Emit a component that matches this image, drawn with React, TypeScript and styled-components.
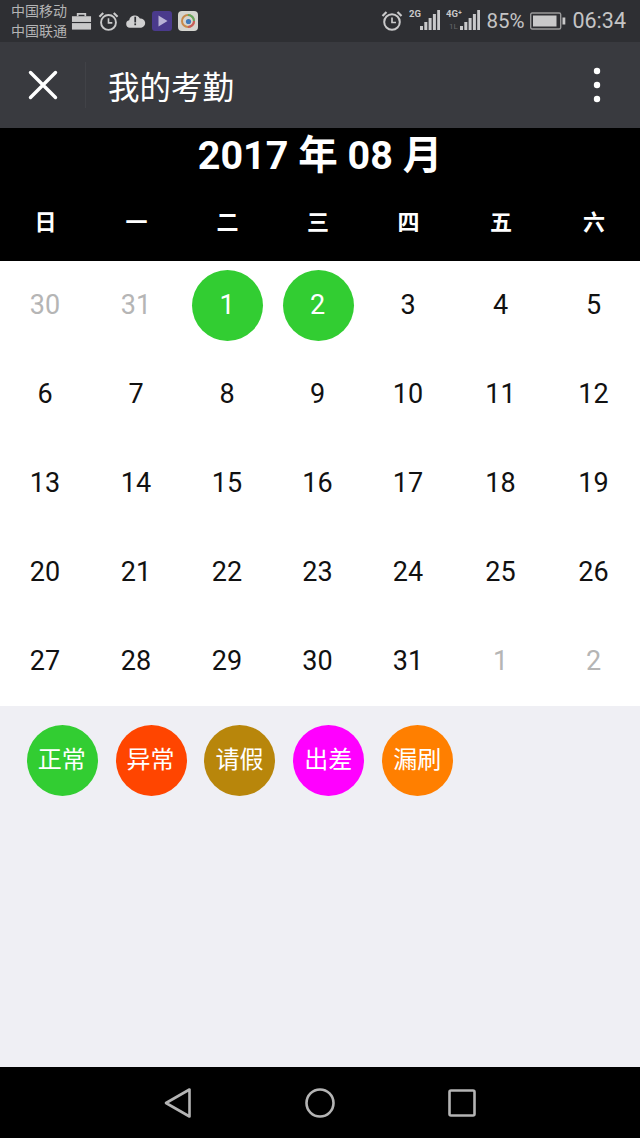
import React from 'react'
import styled, { createGlobalStyle } from 'styled-components'

const CJK = `Roboto, "Noto Sans CJK SC", sans-serif`

const GlobalStyle = createGlobalStyle`
  html, body {
    margin: 0;
    padding: 0;
    background: #efeff4;
    font-family: ${CJK};
  }
`

const Screen = styled.div`
  width: 640px;
  height: 1138px;
  display: flex;
  flex-direction: column;
  overflow: hidden;
`

const StatusBar = styled.div`
  height: 42px;
  background: #2e2f33;
  display: flex;
  align-items: center;
  padding: 0 14px 0 11px;
  color: #c9c9ca;
  flex-shrink: 0;
`

const Carriers = styled.div`
  font-size: 14px;
  line-height: 20px;
  width: 60px;
  color: #b4b4b5;
  white-space: nowrap;
`

const StatusIcons = styled.div`
  display: flex;
  align-items: center;
  gap: 6px;
`

const Spacer = styled.div`
  flex: 1;
`

const StatusRight = styled.div`
  display: flex;
  align-items: center;
  gap: 6px;
`

const StatusText = styled.span<{ $size: number }>`
  font-size: ${({ $size }) => $size}px;
  color: #c4c4c5;
  line-height: 42px;
`

const Toolbar = styled.div`
  height: 86px;
  background: #393a3f;
  display: flex;
  align-items: center;
  flex-shrink: 0;
`

const CloseBox = styled.div`
  width: 86px;
  height: 46px;
  display: flex;
  align-items: center;
  justify-content: center;
  border-right: 1px solid #414247;
  box-sizing: border-box;
`

const Title = styled.div`
  font-size: 31.5px;
  color: #fff;
  margin-left: 22px;
  flex: 1;
`

const MoreBox = styled.div`
  width: 86px;
  display: flex;
  justify-content: center;
`

const MonthHeader = styled.div`
  height: 133px;
  background: #000;
  color: #fff;
  flex-shrink: 0;
  display: flex;
  flex-direction: column;
`

const MonthTitle = styled.div`
  height: 56px;
  line-height: 56px;
  text-align: center;
  font-size: 39.5px;
  font-weight: 700;
`

const columns = '91px 91px 91px 90px 91px 94px 92px'

const WeekRow = styled.div`
  display: grid;
  grid-template-columns: ${columns};
  height: 77px;
  align-items: center;
`

const WeekDay = styled.div`
  text-align: center;
  font-size: 22px;
  font-weight: 700;
  padding-bottom: 5px;
`

const DayGrid = styled.div`
  display: grid;
  grid-template-columns: ${columns};
  grid-auto-rows: 89px;
  height: 445px;
  background: #fff;
  flex-shrink: 0;
`

const DayCell = styled.div`
  display: flex;
  align-items: center;
  justify-content: center;
`

const DayNumber = styled.div<{ $muted?: boolean; $marked?: boolean }>`
  width: 71px;
  height: 71px;
  border-radius: 50%;
  display: flex;
  align-items: center;
  justify-content: center;
  box-sizing: border-box;
  padding: 0 1px 2px 0;
  font-size: 27px;
  color: ${({ $muted, $marked }) => ($marked ? '#fff' : $muted ? '#b5b5b5' : '#111')};
  background: ${({ $marked }) => ($marked ? '#32cd32' : 'transparent')};
`

const LegendArea = styled.div`
  flex: 1;
  background: #efeff4;
  display: flex;
  gap: 17.9px;
  padding: 19px 0 0 26.7px;
  align-items: flex-start;
`

const LegendDot = styled.div<{ $color: string }>`
  width: 71px;
  height: 71px;
  border-radius: 50%;
  background: ${({ $color }) => $color};
  color: #fff;
  font-size: 24px;
  display: flex;
  align-items: center;
  justify-content: center;
  padding: 0 1px 7px 0;
  box-sizing: border-box;
  white-space: nowrap;
`

const NavBar = styled.div`
  height: 71px;
  background: #000;
  flex-shrink: 0;
  display: flex;
  align-items: center;
  justify-content: center;
  gap: 113px;
`

const Briefcase = () => (
  <svg width="21" height="20" viewBox="0 0 22 20">
    <path d="M7 5V2.5h8V5" fill="none" stroke="#c9c9ca" strokeWidth="1.8" />
    <path d="M1 5h20v6H1z" fill="#c9c9ca" />
    <path d="M1 12.2h20V19H1z" fill="#c9c9ca" />
  </svg>
)

const Alarm = ({ size, color }: { size: number; color: string }) => (
  <svg width={size} height={size} viewBox="0 0 22 22" fill="none" stroke={color}>
    <circle cx="11" cy="12" r="7.8" strokeWidth="2" />
    <path d="M11 7.5V12.5H15" strokeWidth="1.7" />
    <path d="M1.5 6L5.5 2M20.5 6L16.5 2" strokeWidth="2.2" />
  </svg>
)

const CloudAlert = () => (
  <svg width="21" height="18" viewBox="0 0 22 18">
    <path
      d="M5 16a4 4 0 0 1-.6-7.9A6 6 0 0 1 15.6 6.4 4.8 4.8 0 0 1 17 16z"
      fill="#d0d0d1"
    />
    <rect x="9.8" y="4.5" width="1.8" height="6" fill="#2e2f33" />
    <rect x="9.8" y="11.5" width="1.8" height="1.9" fill="#2e2f33" />
  </svg>
)

const VideoApp = () => (
  <svg width="20" height="20" viewBox="0 0 20 20">
    <rect width="20" height="20" rx="3" fill="#4a3a8c" />
    <path d="M6.5 4.5L15.5 10L6.5 15.5z" fill="#b9b3d6" />
  </svg>
)

const BrowserApp = () => (
  <svg width="20" height="20" viewBox="0 0 20 20" fill="none">
    <rect width="20" height="20" rx="4" fill="#d5d5d0" />
    <circle cx="10" cy="10" r="6" stroke="#c98a4a" strokeWidth="2" />
    <path d="M10 4a6 6 0 0 1 6 6" stroke="#5fa85f" strokeWidth="2" />
    <path d="M16 10a6 6 0 0 1-6 6" stroke="#c65a5a" strokeWidth="2" />
    <circle cx="10.5" cy="10.5" r="2.6" fill="#3f78b8" />
  </svg>
)

const Signal = ({ label, sub }: { label: string; sub?: boolean }) => (
  <svg width={sub ? 34 : 31} height="26" viewBox={sub ? '0 0 34 26' : '0 0 31 26'}>
    <text x="0" y="9" fontSize="9.5" fontWeight="700" fontFamily="Roboto, sans-serif" fill="#c9c9ca">
      {label}
    </text>
    {sub && (
      <text x="3" y="21" fontSize="8" fontFamily="Roboto, sans-serif" fill="#66676a">
        1L
      </text>
    )}
    {[0, 1, 2, 3, 4].map((i) => (
      <rect
        key={i}
        x={(sub ? 14 : 11) + i * 4.3}
        y={22 - (i + 1) * 4}
        width="3"
        height={(i + 1) * 4}
        fill="#c9c9ca"
      />
    ))}
  </svg>
)

const Battery = () => (
  <svg width="36" height="18" viewBox="0 0 36 18">
    <rect x="0.7" y="1" width="30" height="16" rx="1.5" fill="none" stroke="#9a9a9b" strokeWidth="1.4" />
    <rect x="3" y="3.5" width="23.5" height="11" fill="#c9c9ca" />
    <rect x="32.5" y="5.5" width="2.8" height="7" fill="#c9c9ca" />
  </svg>
)

const NavBack = () => (
  <svg width="28" height="32" viewBox="0 0 28 32" fill="none">
    <path d="M25.5 2.5V29.5L2 16z" stroke="#b4b4b4" strokeWidth="2.6" strokeLinejoin="round" />
  </svg>
)

const NavHome = () => (
  <svg width="30" height="30" viewBox="0 0 30 30" fill="none">
    <circle cx="15" cy="15" r="13.5" stroke="#b4b4b4" strokeWidth="2.6" />
  </svg>
)

const NavRecent = () => (
  <svg width="28" height="28" viewBox="0 0 28 28" fill="none">
    <rect x="1.5" y="1.5" width="25" height="25" rx="1.5" stroke="#b4b4b4" strokeWidth="2.6" />
  </svg>
)

const weekDays = ['日', '一', '二', '三', '四', '五', '六']

const days: { n: number; muted?: boolean; marked?: boolean }[] = [
  { n: 30, muted: true },
  { n: 31, muted: true },
  { n: 1, marked: true },
  { n: 2, marked: true },
  ...Array.from({ length: 29 }, (_, i) => ({ n: i + 3 })),
  { n: 1, muted: true },
  { n: 2, muted: true },
]

const legend = [
  { label: '正常', color: '#32cd32' },
  { label: '异常', color: '#ff4500' },
  { label: '请假', color: '#b8860b' },
  { label: '出差', color: '#ff00ff' },
  { label: '漏刷', color: '#ff7f00' },
]

export default function App() {
  return (
    <Screen>
      <GlobalStyle />
      <StatusBar>
        <Carriers>
          中国移动
          <br />
          中国联通
        </Carriers>
        <StatusIcons>
          <Briefcase />
          <Alarm size={21} color="#c9c9ca" />
          <CloudAlert />
          <VideoApp />
          <BrowserApp />
        </StatusIcons>
        <Spacer />
        <StatusRight>
          <Alarm size={22} color="#c9c9ca" />
          <Signal label="2G" />
          <Signal label="4G⁺" sub />
          <StatusText $size={20.5}>85%</StatusText>
          <Battery />
          <StatusText $size={21.5}>06:34</StatusText>
        </StatusRight>
      </StatusBar>
      <Toolbar>
        <CloseBox>
          <svg width="30" height="30" viewBox="0 0 30 30">
            <path d="M2.5 2.5L27.5 27.5M27.5 2.5L2.5 27.5" stroke="#fff" strokeWidth="3.4" strokeLinecap="round" />
          </svg>
        </CloseBox>
        <Title>我的考勤</Title>
        <MoreBox>
          <svg width="8" height="36" viewBox="0 0 8 36">
            <circle cx="4" cy="4" r="3.2" fill="#fff" />
            <circle cx="4" cy="18" r="3.2" fill="#fff" />
            <circle cx="4" cy="32" r="3.2" fill="#fff" />
          </svg>
        </MoreBox>
      </Toolbar>
      <MonthHeader>
        <MonthTitle>2017 年 08 月</MonthTitle>
        <WeekRow>
          {weekDays.map((d) => (
            <WeekDay key={d}>{d}</WeekDay>
          ))}
        </WeekRow>
      </MonthHeader>
      <DayGrid>
        {days.map((d, i) => (
          <DayCell key={i}>
            <DayNumber $muted={d.muted} $marked={d.marked}>
              {d.n}
            </DayNumber>
          </DayCell>
        ))}
      </DayGrid>
      <LegendArea>
        {legend.map((l) => (
          <LegendDot key={l.label} $color={l.color}>
            {l.label}
          </LegendDot>
        ))}
      </LegendArea>
      <NavBar>
        <NavBack />
        <NavHome />
        <NavRecent />
      </NavBar>
    </Screen>
  )
}
